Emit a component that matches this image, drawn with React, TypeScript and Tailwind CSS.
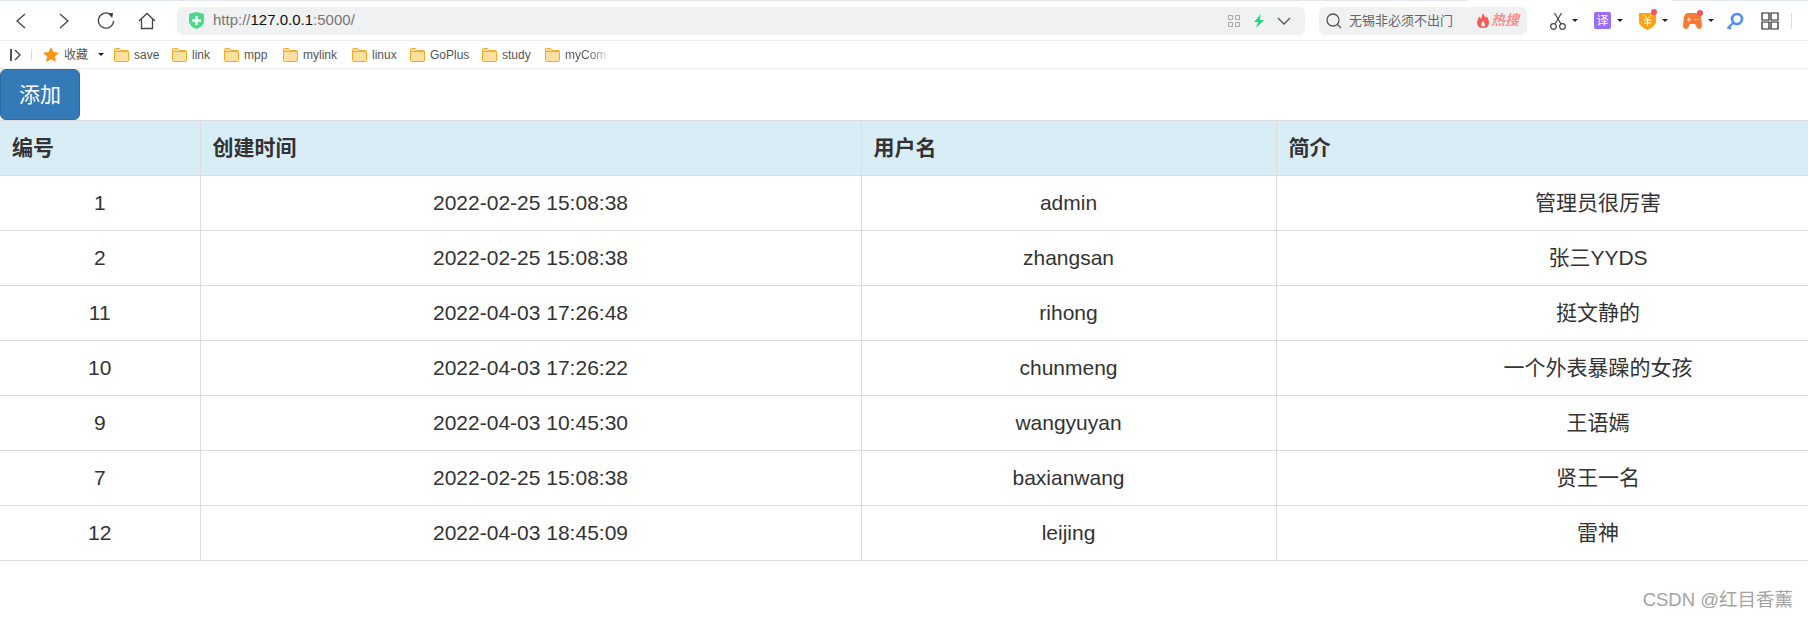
const rows = [
  { id: 1, time: '2022-02-25 15:08:38', user: 'admin', bio: '管理员很厉害' },
  { id: 2, time: '2022-02-25 15:08:38', user: 'zhangsan', bio: '张三YYDS' },
  { id: 11, time: '2022-04-03 17:26:48', user: 'rihong', bio: '挺文静的' },
  { id: 10, time: '2022-04-03 17:26:22', user: 'chunmeng', bio: '一个外表暴躁的女孩' },
  { id: 9, time: '2022-04-03 10:45:30', user: 'wangyuyan', bio: '王语嫣' },
  { id: 7, time: '2022-02-25 15:08:38', user: 'baxianwang', bio: '贤王一名' },
  { id: 12, time: '2022-04-03 18:45:09', user: 'leijing', bio: '雷神' },
]

const bookmarks = [
  { name: 'save', w: 'w-[26px]' },
  { name: 'link', w: 'w-[20px]' },
  { name: 'mpp', w: 'w-[27px]' },
  { name: 'mylink', w: 'w-[37px]' },
  { name: 'linux', w: 'w-[26px]' },
  { name: 'GoPlus', w: 'w-[40px]' },
  { name: 'study', w: 'w-[31px]' },
]

const Caret = () => <span className="block h-0 w-0 border-x-[3px] border-t-[3px] border-x-transparent border-t-[#222]" />

const Folder = () => (
  <svg width="15" height="14" viewBox="0 0 15 14" className="shrink-0">
    <path d="M.5 12.5v-11q0-1 1-1h4l1.5 2h6.5q1 0 1 1v9q0 1-1 1h-12q-1 0-1-1z" fill="#ffe09f" stroke="#f8a925" />
    <path d="M.5 3.5h14" stroke="#f8a925" />
  </svg>
)

function Toolbar() {
  return (
    <div className="flex h-[39px] items-center">
      <div className="flex w-[177px] shrink-0 items-center">
        <svg width="14" height="16" viewBox="0 0 14 16" fill="none" stroke="#444" strokeWidth="1.3" className="ml-[15px]">
          <path d="M10 1 2 8l8 7" />
        </svg>
        <svg width="14" height="16" viewBox="0 0 14 16" fill="none" stroke="#444" strokeWidth="1.3" className="ml-[27px]">
          <path d="m4 1 8 7-8 7" />
        </svg>
        <svg width="18" height="18" viewBox="0 0 18 18" fill="none" className="ml-[27px]">
          <path d="M14 2.8A7.6 7.6 0 1 0 16.6 9" stroke="#444" strokeWidth="1.3" />
          <path d="M11.2 1.6 16 1l-.8 5z" fill="#333" />
        </svg>
        <svg width="18" height="18" viewBox="0 0 18 18" fill="none" stroke="#444" strokeWidth="1.3" className="ml-[23px]">
          <path d="M1 9 9 1.5 17 9M3.5 7.5v9h11v-9" />
        </svg>
      </div>

      <div className="flex h-[28px] w-[1128px] shrink-0 items-center rounded-[6px] bg-[#f0f1f3]">
        <svg width="15" height="17" viewBox="0 0 15 17" className="ml-[12px]">
          <path d="M7.5 0 15 2v7q0 5-7.5 8Q0 14 0 9V2z" fill="#4cd88a" />
          <path d="M6.3 4h2.4v3.3H12v2.4H8.7V13H6.3V9.700H3V7.300h3.300z" fill="#fff" />
        </svg>
        <span className="ml-[9px] text-[15px] text-[#777]">
          http://<span className="text-[#111]">127.0.0.1</span>:5000/
        </span>
        <svg width="12" height="12" viewBox="0 0 12 12" fill="none" stroke="#aaa" className="ml-auto">
          <path d="M.5.500h4v4h-4zM7.500.500h4v4h-4zM.5 7.500h4v4h-4zM7.500 7.500h4v4h-4z" />
        </svg>
        <svg width="10" height="14" viewBox="0 0 10 14" className="ml-[14px]">
          <path d="M7 0 0 8h4l-2 6 8-8H5.500z" fill="#22d47f" />
        </svg>
        <svg width="14" height="8" viewBox="0 0 14 8" fill="none" stroke="#555" strokeWidth="1.300" className="ml-[13px] mr-[14px]">
          <path d="m1 1 6 6 6-6" />
        </svg>
      </div>

      <div className="ml-[14px] flex h-[28px] w-[208px] shrink-0 items-center rounded-[6px] bg-[#f0f1f3]">
        <svg width="16" height="16" viewBox="0 0 16 16" fill="none" stroke="#555" strokeWidth="1.300" className="ml-[7px]">
          <circle cx="7" cy="7" r="6" />
          <path d="m11.500 11.500 3.500 3.500" />
        </svg>
        <span className="ml-[7px] text-[13px] text-[#666]">无锡非必须不出门</span>
        <svg width="12" height="15" viewBox="0 0 12 15" className="ml-[24px]">
          <path d="M6 0q1 3 3 5 .5-1 .5-2Q12 6 12 9.500 12 15 6 15T0 9.500Q0 6 2.500 3.500 3 5 4 5.500 5 3 6 0z" fill="#fa5a55" />
          <path d="M6 8q2 2 2 4 0 1.500-2 1.500T4 12q0-2 2-4z" fill="#fff" />
        </svg>
        <span className="ml-[2px] text-[14px] font-bold italic text-[#fb8d8a]">热搜</span>
      </div>

      <svg width="16" height="18" viewBox="0 0 16 18" fill="none" stroke="#444" strokeWidth="1.200" className="ml-[23px]">
        <circle cx="3.500" cy="14.500" r="2.800" />
        <circle cx="12.500" cy="14.500" r="2.800" />
        <path d="M5 12 11.500 1M11 12 4.500 1" />
      </svg>
      <span className="ml-[6px]"><Caret /></span>
      <span className="ml-[16px] flex h-[17px] w-[17px] items-center justify-center rounded-[2px] bg-[#9b6bfb] text-[12px] leading-none text-white">译</span>
      <span className="ml-[6px]"><Caret /></span>
      <span className="relative ml-[16px] block">
        <svg width="17" height="19" viewBox="0 0 17 19" className="block">
          <path d="M0 2h17v9q0 4-8.500 8Q0 15 0 11z" fill="#fba514" />
          <path d="m5 4 3.500 4L12 4M5 9h7M5 12h7M8.500 8v7" fill="none" stroke="#fff" />
        </svg>
        <span className="absolute -right-[1px] -top-[2px] h-[6px] w-[6px] rounded-full bg-[#f5565b]" />
      </span>
      <span className="ml-[6px]"><Caret /></span>
      <span className="relative ml-[15px] block">
        <svg width="19" height="16" viewBox="0 0 19 16" className="block">
          <path d="M5 0h9q3 0 4 4l1 8q0 4-3 4-2 0-3-3l-1-2H7l-1 2q-1 3-3 3-3 0-3-4l1-8q1-4 4-4z" fill="#fa7a33" />
          <path d="M4 6.500h4M6 4.500v4M11 6.500h1.500M14 6.500h1.500" stroke="#fff" strokeWidth="1.200" />
        </svg>
        <span className="absolute -right-[1px] -top-[3px] h-[6px] w-[6px] rounded-full bg-[#f5565b]" />
      </span>
      <span className="ml-[6px]"><Caret /></span>
      <svg width="18" height="18" viewBox="0 0 18 18" fill="none" className="ml-[12px]">
        <circle cx="11" cy="7" r="5" stroke="#4e8ff7" strokeWidth="2.600" />
        <path d="M7 11 1.500 16.500M3 15l2 2" stroke="#4e8ff7" strokeWidth="2.200" />
      </svg>
      <svg width="18" height="18" viewBox="0 0 18 18" fill="none" stroke="#222" strokeWidth="1.200" className="ml-[17px]">
        <path d="M1 1h7v7H1zM10 1h7v7h-7zM1 10h7v7H1zM10 10h7v7h-7z" />
      </svg>
      <span className="ml-[12px] h-[16px] w-px bg-[#ddd]" />
    </div>
  )
}

function BookmarkBar() {
  return (
    <div className="flex h-[29px] items-center border-y border-[#eee] text-[12px] text-[#555]">
      <svg width="12" height="12" viewBox="0 0 12 12" fill="none" stroke="#555" className="ml-[10px]">
        <path d="M1 0v12" strokeWidth="2" />
        <path d="m5 1 5 5-5 5" strokeWidth="1.500" />
      </svg>
      <span className="ml-[9px] h-[12px] w-px bg-[#ddd]" />
      <svg width="16" height="15" viewBox="0 0 16 15" className="ml-[11px]">
        <path d="m8 0 2.400 5 5.600.7-4.100 3.800 1.100 5.500L8 12.300 3 15l1.100-5.500L0 5.700 5.600 5z" fill="#fb9413" />
      </svg>
      <span className="ml-[5px]">收藏</span>
      <span className="ml-[10px]"><Caret /></span>
      <div className="ml-[10px] flex items-center gap-[12px]">
        {bookmarks.map((b) => (
          <span key={b.name} className="flex items-center gap-[5px]">
            <Folder />
            <span className={b.w}>{b.name}</span>
          </span>
        ))}
        <span className="flex items-center gap-[5px]">
          <Folder />
          <span className="bg-gradient-to-r from-[#555] from-60% to-[#ddd] bg-clip-text text-transparent">myCom</span>
        </span>
      </div>
    </div>
  )
}

export default function App() {
  return (
    <div className="h-[620px] w-[1808px] overflow-hidden bg-white font-['Liberation_Sans','Noto_Sans_CJK_SC',sans-serif] text-[#333]">
      <div className="flex h-px">
        <div className="w-[1468px] bg-[#e3e7ef]" />
        <div className="w-[204px]" />
        <div className="flex-1 bg-[#e3e7ef]" />
      </div>
      <Toolbar />
      <BookmarkBar />

      <button className="block h-[51px] w-[80px] rounded-[6px] border border-[#2e6da4] bg-[#337ab7] text-[21px] text-white">
        添加
      </button>

      <table className="w-[1920px] table-fixed border-collapse text-[21px]">
        <colgroup>
          <col className="w-[200px]" />
          <col className="w-[661px]" />
          <col className="w-[415px]" />
          <col className="w-[644px]" />
        </colgroup>
        <thead>
          <tr className="h-[55px] bg-[#d9edf7]">
            {['编号', '创建时间', '用户名', '简介'].map((h) => (
              <th key={h} className="border border-[#ddd] pl-[12px] text-left font-bold first:border-l-0">
                {h}
              </th>
            ))}
          </tr>
        </thead>
        <tbody>
          {rows.map((r) => (
            <tr key={r.id} className="h-[55px] text-center">
              <td className="border border-l-0 border-[#ddd]">{r.id}</td>
              <td className="border border-[#ddd]">{r.time}</td>
              <td className="border border-[#ddd]">{r.user}</td>
              <td className="border border-[#ddd]">{r.bio}</td>
            </tr>
          ))}
        </tbody>
      </table>

      <div className="mt-[27px] pr-[15px] text-right text-[18.500px] leading-[24px] text-[#a3a3a3]">CSDN @红目香薰</div>
    </div>
  )
}
